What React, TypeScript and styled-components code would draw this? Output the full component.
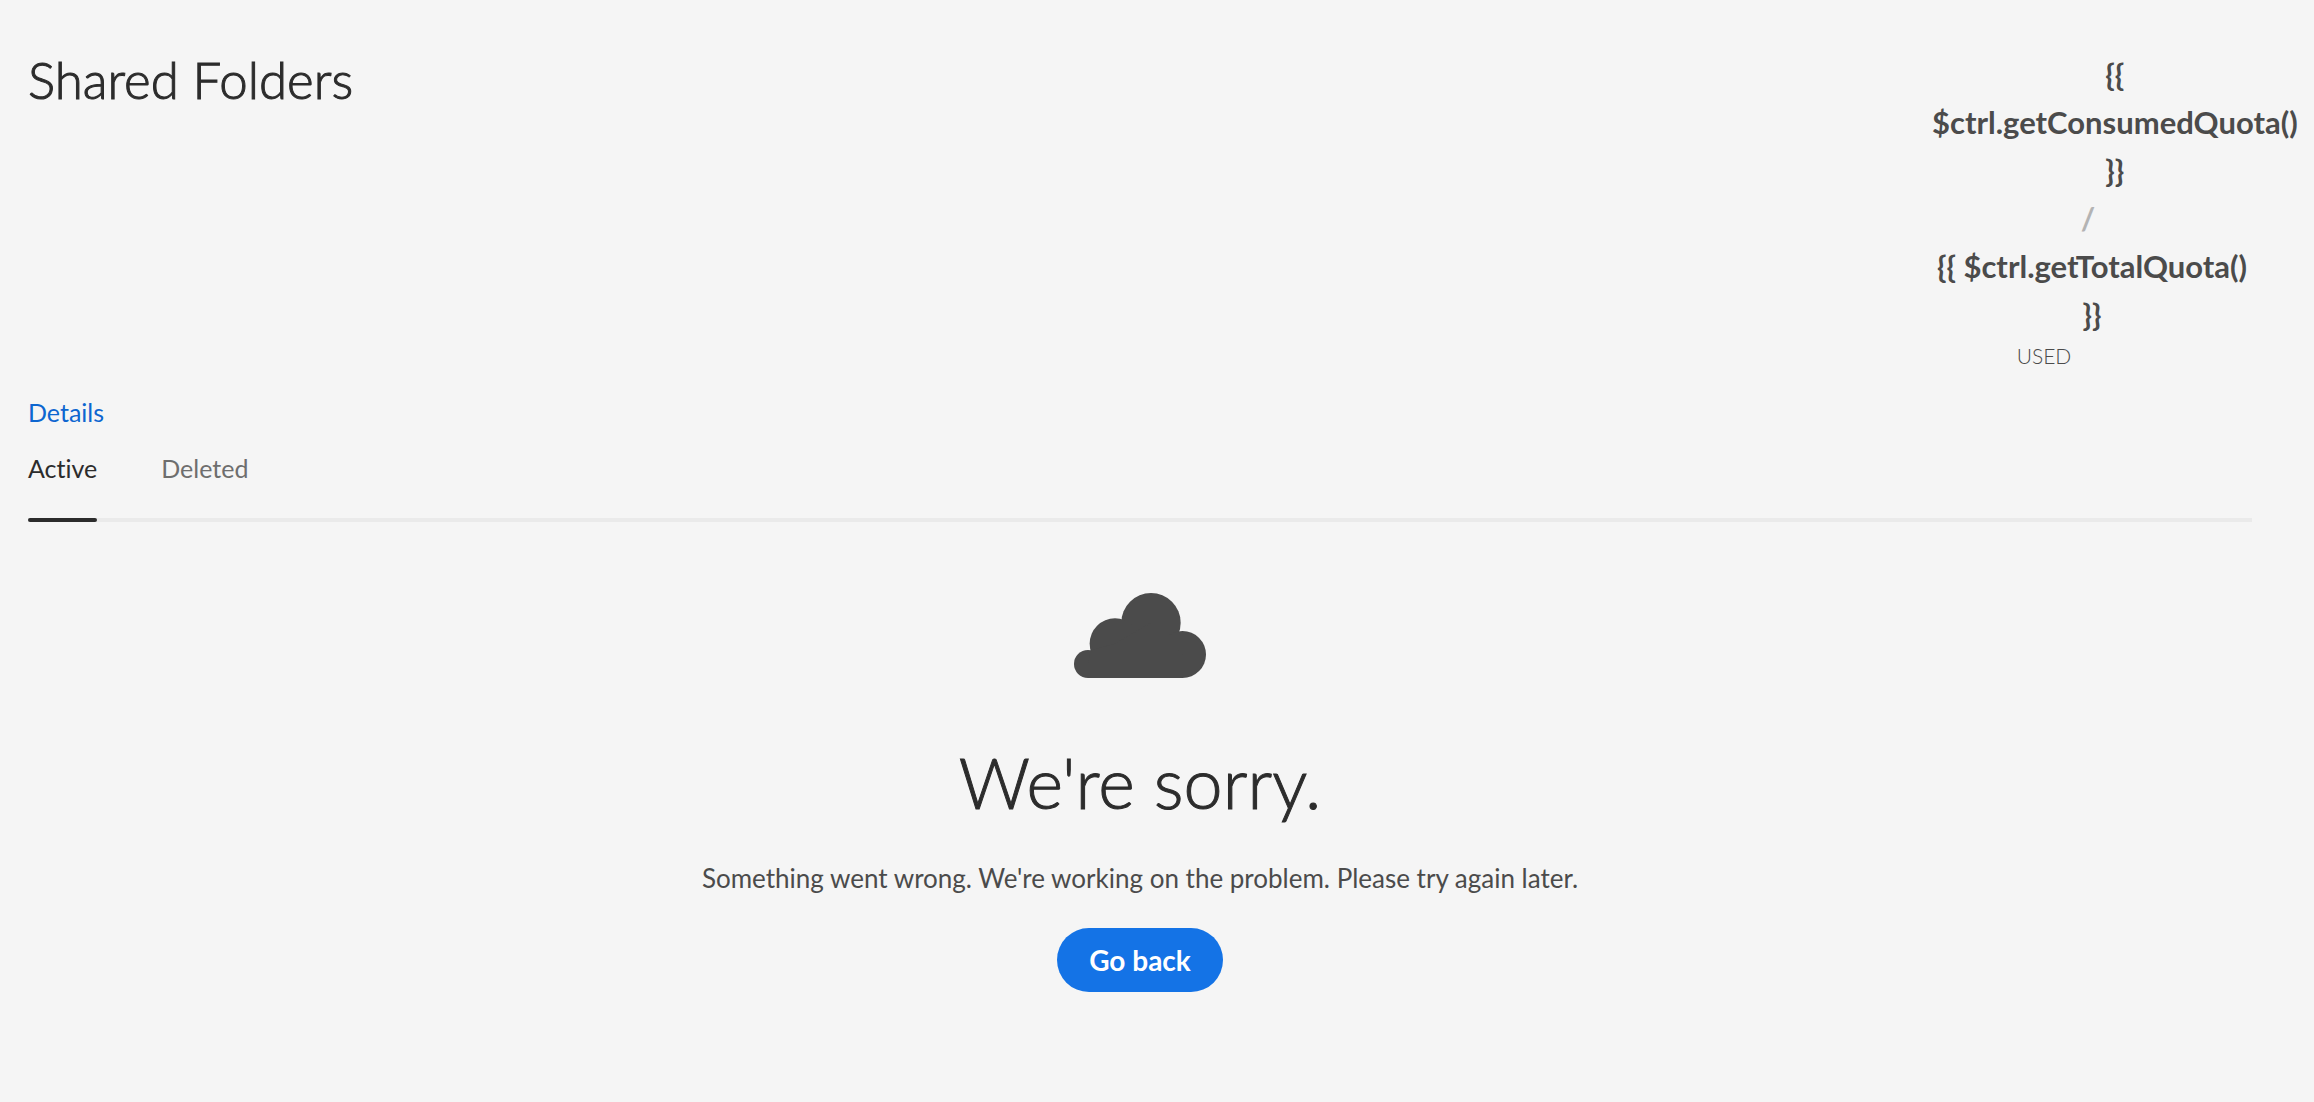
import React, { useState } from "react";
import styled, { createGlobalStyle } from "styled-components";

const GlobalStyle = createGlobalStyle`
  *, *::before, *::after {
    box-sizing: border-box;
  }
  body {
    margin: 0;
    background: #f5f5f5;
    color: #4b4b4b;
    font-family: Lato, "Open Sans", sans-serif;
    font-variant-ligatures: none;
  }
`;

const Page = styled.div`
  padding: 50px 62px 40px 28px;
`;

const Header = styled.header`
  display: flex;
  justify-content: space-between;
  align-items: flex-start;
`;

const Title = styled.h1`
  margin: 0;
  font-size: 51px;
  font-weight: 300;
  line-height: 60px;
  color: #2c2c2c;
  -webkit-text-stroke: 1px #2c2c2c;
`;

const Quota = styled.div`
  flex: none;
  width: 320px;
  text-align: center;
`;

const QuotaValue = styled.strong`
  display: block;
  width: fit-content;
  font-size: 31px;
  font-weight: 700;
  line-height: 48px;
`;

const QuotaDivider = styled.span`
  display: block;
  padding-right: 8px;
  font-size: 31px;
  font-weight: 700;
  line-height: 48px;
  color: #b3b3b3;
`;

const QuotaLabel = styled.span`
  display: block;
  width: 224px;
  font-size: 21px;
  font-weight: 300;
  line-height: 36px;
  text-transform: uppercase;
`;

const DetailsLink = styled.a`
  display: block;
  width: fit-content;
  margin-top: 14px;
  font-size: 25px;
  line-height: 48px;
  color: #0d66d0;
  text-decoration: none;
`;

const Tabs = styled.div`
  display: flex;
  gap: 64px;
  margin-top: 8px;
  box-shadow: inset 0 -4px #eaeaea;
`;

const Tab = styled.button<{ $selected: boolean }>`
  position: relative;
  padding: 0 0 30px;
  border: 0;
  background: none;
  font: inherit;
  font-size: 25px;
  line-height: 48px;
  color: ${(p) => (p.$selected ? "#2c2c2c" : "#6e6e6e")};
  cursor: pointer;

  &::after {
    content: "";
    position: absolute;
    inset: auto 0 0;
    height: 4px;
    border-radius: 2px;
    background: ${(p) => (p.$selected ? "#2c2c2c" : "transparent")};
  }
`;

const ErrorPanel = styled.main`
  display: flex;
  flex-direction: column;
  align-items: center;
  padding-top: 71px;
  text-align: center;
`;

const CloudIcon = styled.svg`
  display: block;
  width: 132px;
  height: 85px;
  fill: #4b4b4b;
`;

const ErrorHeading = styled.h2`
  margin: 64px 0 0;
  font-size: 70px;
  font-weight: 300;
  line-height: 80px;
  color: #2c2c2c;
  -webkit-text-stroke: 1px #2c2c2c;
`;

const ErrorText = styled.p`
  margin: 36px 0 30px;
  font-size: 26px;
  line-height: 40px;
`;

const PrimaryButton = styled.button`
  height: 64px;
  padding: 0 32px;
  border: 0;
  border-radius: 32px;
  background: #1473e6;
  color: #fff;
  font: inherit;
  font-size: 28px;
  font-weight: 700;
  cursor: pointer;
`;

const tabs = ["Active", "Deleted"];

export default function App() {
  const [selected, setSelected] = useState("Active");

  return (
    <>
      <GlobalStyle />
      <Page>
        <Header>
          <Title>Shared Folders</Title>
          <Quota>
            <QuotaValue>{"{{ $ctrl.getConsumedQuota() }}"}</QuotaValue>
            <QuotaDivider>/</QuotaDivider>
            <QuotaValue>{"{{ $ctrl.getTotalQuota() }}"}</QuotaValue>
            <QuotaLabel>Used</QuotaLabel>
          </Quota>
        </Header>
        <DetailsLink href="#details">Details</DetailsLink>
        <Tabs role="tablist">
          {tabs.map((name) => (
            <Tab
              key={name}
              type="button"
              role="tab"
              aria-selected={name === selected}
              $selected={name === selected}
              onClick={() => setSelected(name)}
            >
              {name}
            </Tab>
          ))}
        </Tabs>
        <ErrorPanel>
          <CloudIcon viewBox="102 68 396 255" aria-hidden="true">
            <circle cx="333" cy="157" r="89" />
            <circle cx="225" cy="220" r="76" />
            <circle cx="427.5" cy="252.5" r="70.5" />
            <circle cx="144" cy="281" r="42" />
            <path d="M144 323V281L152 240 225 220 333 157 427 252V323Z" />
          </CloudIcon>
          <ErrorHeading>We're sorry.</ErrorHeading>
          <ErrorText>
            Something went wrong. We're working on the problem. Please try again later.
          </ErrorText>
          <PrimaryButton type="button">Go back</PrimaryButton>
        </ErrorPanel>
      </Page>
    </>
  );
}
